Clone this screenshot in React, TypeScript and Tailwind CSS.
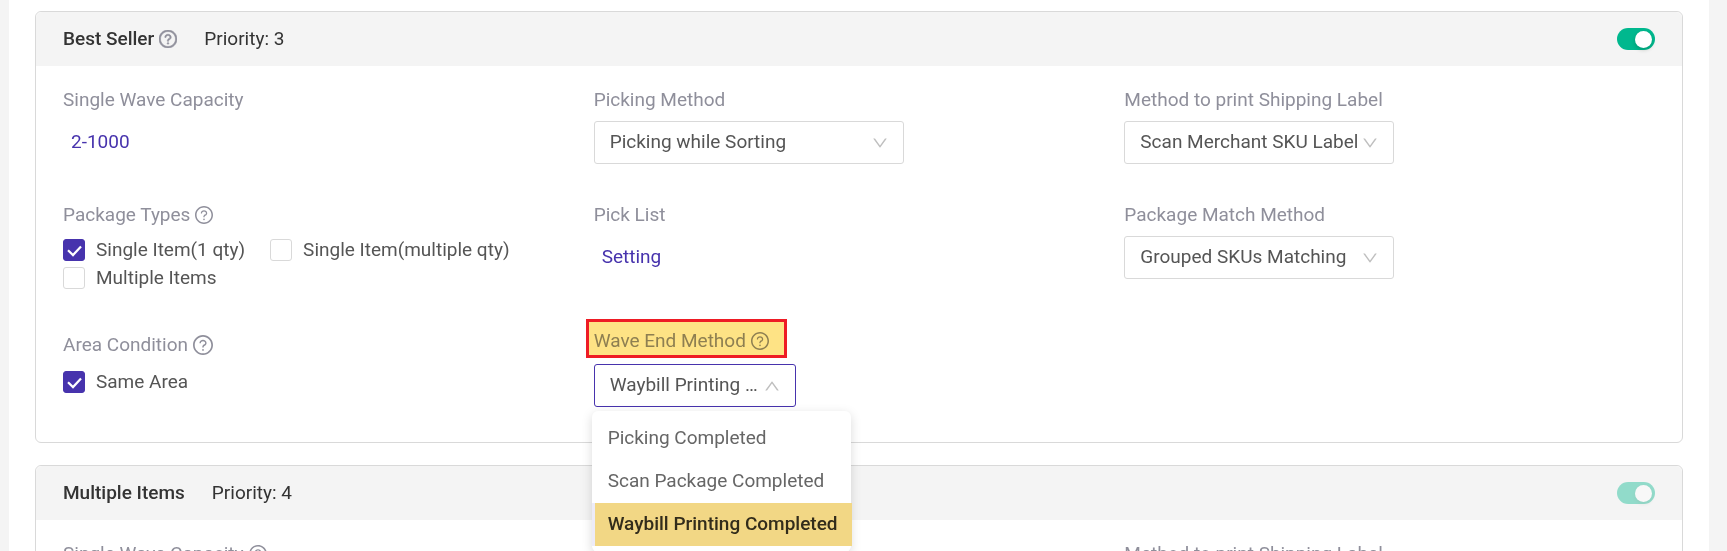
import React, { useState } from 'react';
import { AiOutlineDown, AiOutlineQuestionCircle } from 'react-icons/ai';

const endMethods = ['Picking Completed', 'Scan Package Completed', 'Waybill Printing Completed'];

const HelpIcon: React.FC<{ className?: string }> = ({ className = 'size-[18px]' }) => (
  <AiOutlineQuestionCircle viewBox="64 64 896 896" className={`shrink-0 ${className}`} />
);

interface FieldProps {
  label: React.ReactNode;
  htmlFor?: string;
  className?: string;
  children?: React.ReactNode;
}

const Field: React.FC<FieldProps> = ({ label, htmlFor, className = '', children }) => (
  <div className={`flex flex-col items-start gap-[7px] ${className}`}>
    {htmlFor ? (
      <label htmlFor={htmlFor} className="flex items-center gap-[5px] leading-[29px] text-[#8f8f9b]">
        {label}
      </label>
    ) : (
      <div className="flex items-center gap-[5px] leading-[29px] text-[#8f8f9b]">{label}</div>
    )}
    {children}
  </div>
);

interface SelectProps {
  id: string;
  value: string;
  options: string[];
  open?: boolean;
  className: string;
  onChange?: (value: string) => void;
}

const Select: React.FC<SelectProps> = ({ id, value, options, open, className, onChange }) => (
  <div className={`relative ${className}`}>
    <select
      id={id}
      value={value}
      onChange={(e) => onChange?.(e.target.value)}
      className={`h-[43px] w-full appearance-none truncate rounded-[3px] border bg-white pb-px pl-[15px] pr-8 text-[#555] outline-none ${
        open ? 'border-[#4733ad]' : 'border-[#d9d9d9]'
      }`}
    >
      {options.map((option) => (
        <option key={option}>{option}</option>
      ))}
    </select>
    <AiOutlineDown
      className={`pointer-events-none absolute right-[15px] top-[13px] size-[18px] text-[#bfbfbf] ${open ? 'rotate-180' : ''}`}
    />
  </div>
);

const Checkbox: React.FC<{ label: string; defaultChecked?: boolean }> = ({ label, defaultChecked }) => (
  <label className="flex h-7 items-center gap-[11px] text-[#555]">
    <span className="relative size-[22px]">
      <input
        type="checkbox"
        defaultChecked={defaultChecked}
        className="peer block size-[22px] appearance-none rounded-[3px] border border-[#d9d9d9] bg-white checked:border-[#4733ad] checked:bg-[#4733ad]"
      />
      <svg
        viewBox="0 0 22 22"
        className="pointer-events-none absolute inset-0 hidden size-[22px] peer-checked:block"
        fill="none"
        stroke="#fff"
        strokeWidth="2.2"
      >
        <path d="M5 11.2l5 4.9 8-8.6" />
      </svg>
    </span>
    {label}
  </label>
);

const Toggle: React.FC<{ label: string; disabled?: boolean }> = ({ label, disabled }) => {
  const [on, setOn] = useState(true);
  return (
    <button
      type="button"
      role="switch"
      aria-checked={on}
      aria-label={label}
      disabled={disabled}
      onClick={() => setOn(!on)}
      className={`flex h-[22px] w-[38px] items-center rounded-full px-[3px] disabled:opacity-40 ${
        on ? 'justify-end bg-[#00b88e]' : 'justify-start bg-[#bfbfbf]'
      }`}
    >
      <span className="size-[17px] rounded-full bg-white shadow-[0_2px_4px_rgba(0,35,11,0.2)]" />
    </button>
  );
};

interface RuleCardProps {
  title: string;
  priority: number;
  help?: boolean;
  disabled?: boolean;
  children: React.ReactNode;
}

const RuleCard: React.FC<RuleCardProps> = ({ title, priority, help, disabled, children }) => (
  <section className="rounded-md border border-[#d9d9d9]">
    <header className="flex h-[54px] items-center rounded-t-md bg-[#f4f4f4] px-[27px] text-[#333]">
      <h2 className="flex items-center gap-[5px] font-medium">
        {title}
        {help && <HelpIcon className="size-[18px] stroke-[#8f8f9b] stroke-[30px] text-[#8f8f9b]" />}
      </h2>
      <span className="ml-[27px] flex-1">Priority: {priority}</span>
      <Toggle label={title} disabled={disabled} />
    </header>
    <div className="grid grid-cols-3 gap-y-9 px-[27px] pb-[35px] pt-[19px]">{children}</div>
  </section>
);

const App: React.FC = () => {
  const [endMethod, setEndMethod] = useState('Waybill Printing Completed');

  return (
    <div className="h-screen overflow-hidden bg-[#f4f4f4] pl-[9px] pr-[18px] font-[Roboto,sans-serif] text-[19px] leading-7">
      <main className="flex min-h-full flex-col gap-[22px] bg-white px-[26px] pt-[11px]">
        <RuleCard title="Best Seller" priority={3} help>
          <Field label="Single Wave Capacity">
            <button type="button" className="h-[41px] px-2 text-[#4733ad]">
              2-1000
            </button>
          </Field>
          <Field label="Picking Method" htmlFor="picking">
            <Select id="picking" value="Picking while Sorting" options={['Picking while Sorting']} className="w-[310px]" />
          </Field>
          <Field label="Method to print Shipping Label" htmlFor="print">
            <Select id="print" value="Scan Merchant SKU Label" options={['Scan Merchant SKU Label']} className="w-[270px]" />
          </Field>

          <Field
            label={
              <>
                Package Types <HelpIcon />
              </>
            }
          >
            <div className="flex flex-wrap gap-x-[25px]">
              <Checkbox label="Single Item(1 qty)" defaultChecked />
              <Checkbox label="Single Item(multiple qty)" />
              <Checkbox label="Multiple Items" />
            </div>
          </Field>
          <Field label="Pick List">
            <button type="button" className="h-[41px] px-2 text-[#4733ad]">
              Setting
            </button>
          </Field>
          <Field label="Package Match Method" htmlFor="match">
            <Select id="match" value="Grouped SKUs Matching" options={['Grouped SKUs Matching']} className="w-[270px]" />
          </Field>

          <Field
            label={
              <span className="flex h-[33px] items-center gap-[5px]">
                Area Condition <HelpIcon className="size-5" />
              </span>
            }
          >
            <Checkbox label="Same Area" defaultChecked />
          </Field>
          <Field
            htmlFor="wave-end"
            label={
              <span className="relative flex h-[29px] items-center gap-[5px] pb-1">
                Wave End Method <HelpIcon />
                <span className="pointer-events-none absolute -bottom-px -left-2 -right-[18px] -top-[9px] border-[3px] border-[#ee1c25] bg-[#fee385] mix-blend-multiply" />
              </span>
            }
          >
            <div className="relative">
              <Select
                id="wave-end"
                open
                value={endMethod}
                options={endMethods}
                onChange={setEndMethod}
                className="w-[202px]"
              />
              <ul
                role="listbox"
                aria-label="Wave End Method"
                className="absolute -left-0.5 top-[47px] z-10 w-[259px] rounded-md bg-white py-1.5 shadow-[0_3px_11px_rgba(0,0,0,0.15)]"
              >
                {endMethods.map((method) => (
                  <li
                    key={method}
                    role="option"
                    aria-selected={method === endMethod}
                    onClick={() => setEndMethod(method)}
                    className={`h-[43px] cursor-pointer whitespace-nowrap leading-[41px] ${
                      method === endMethod
                        ? '-mr-px border-l-3 border-[#edebf7] bg-[#f2d785] pl-[13px] font-medium text-[#322c1b]'
                        : 'pl-4 text-[#666]'
                    }`}
                  >
                    {method}
                  </li>
                ))}
              </ul>
            </div>
          </Field>
        </RuleCard>

        <RuleCard title="Multiple Items" priority={4} disabled>
          <Field
            label={
              <>
                Single Wave Capacity <HelpIcon />
              </>
            }
          />
          <Field label="Method to print Shipping Label" className="col-start-3" />
        </RuleCard>
      </main>
    </div>
  );
};

export default App;
